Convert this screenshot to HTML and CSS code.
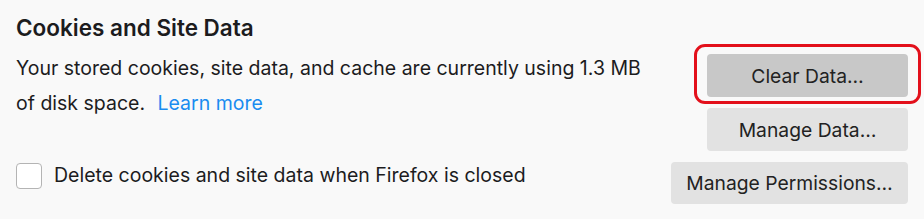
FILE: index.html
```html
<!DOCTYPE html>
<html lang="en">
<head>
  <meta charset="UTF-8">
  <title>Cookies and Site Data</title>
  <link rel="stylesheet" href="styles.css">
</head>
<body>
  <div class="section">
    <h2>Cookies and Site Data</h2>
    <div class="row">
      <p class="desc">
        Your stored cookies, site data, and cache are currently using 1.3 MB<br>
        of disk space. <a href="#">Learn more</a>
      </p>
      <div class="buttons">
        <button class="active">Clear Data…</button>
        <button>Manage Data…</button>
      </div>
    </div>
    <div class="row">
      <label class="check">
        <span class="box"></span>
        <span class="label">Delete cookies and site data when Firefox is closed</span>
      </label>
      <button class="wide">Manage Permissions…</button>
    </div>
  </div>
</body>
</html>
```

FILE: styles.css
```css
body {
  margin: 0;
  background-color: #f9f9f9;
  font-family: Inter, "Liberation Sans", Arial, sans-serif;
  color: #1c1c1e;
}

.section {
  padding: 15px 16px 0 16px;
}

h2 {
  margin: 0 0 13px 0;
  font-size: 22.5px;
  font-weight: 600;
  line-height: 26px;
}

.row {
  display: flex;
  justify-content: space-between;
  align-items: flex-start;
  margin-bottom: 11px;
}

.desc {
  margin: -3px 0 0 0;
  font-size: 19.5px;
  line-height: 35px;
}

.desc a {
  color: #1a8cf0;
  text-decoration: none;
  margin-left: 7px;
}

.buttons {
  display: flex;
  flex-direction: column;
  gap: 11px;
}

button {
  position: relative;
  width: 201px;
  height: 43px;
  border: none;
  border-radius: 4px;
  background-color: #e2e2e2;
  color: #222;
  font-family: inherit;
  font-size: 19.3px;
  cursor: pointer;
}

button.active {
  background-color: #c8c8c8;
}

/* red highlight ring around Clear Data */
button.active::after {
  content: "";
  position: absolute;
  top: -10px;
  bottom: -7px;
  left: -13px;
  right: -13px;
  border: 3px solid #e3101b;
  border-radius: 11px;
}

button.wide {
  width: 237px;
  height: 42px;
}

.check {
  display: flex;
  align-items: center;
  gap: 12px;
  margin-top: 1px;
  font-size: 19.5px;
  line-height: 26px;
}

.check .label {
  margin-top: -3px;
}

.box {
  width: 24px;
  height: 24px;
  background-color: #fff;
  border: 1px solid #b4b4b4;
  border-radius: 4px;
}
```
